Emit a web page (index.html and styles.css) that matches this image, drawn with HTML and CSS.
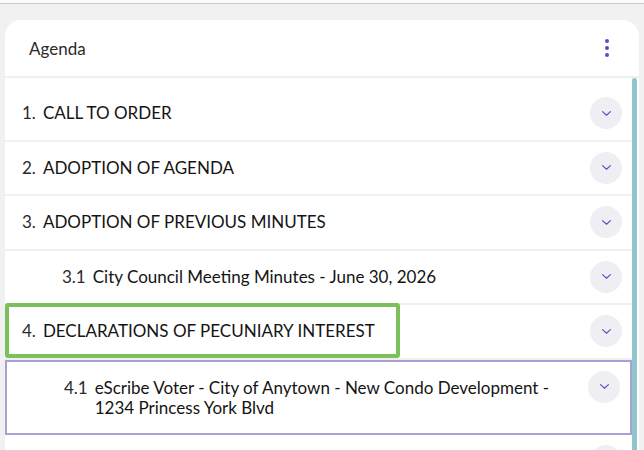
FILE: index.html
```html
<!DOCTYPE html>
<html>
<head>
    <link rel="stylesheet" href="styles.css">
</head>
<body>
    <div class="topbar"></div>
    <div class="page">
        <div class="agenda-card">
            <!-- header -->
            <div class="card-header">
                <div class="card-title">Agenda</div>
                <button class="kebab" aria-label="More">
                    <span></span><span></span><span></span>
                </button>
            </div>

            <div class="card-body">
                <div class="agenda-list">
                    <div class="agenda-item">
                        <div class="item-label"><span class="item-num">1.</span><span class="item-title">CALL TO ORDER</span></div>
                        <button class="toggle"><svg viewBox="0 0 12 8" width="11" height="7"><path d="M1.5 1.8 6 6 10.5 1.8" /></svg></button>
                    </div>
                    <div class="agenda-item">
                        <div class="item-label"><span class="item-num">2.</span><span class="item-title">ADOPTION OF AGENDA</span></div>
                        <button class="toggle"><svg viewBox="0 0 12 8" width="11" height="7"><path d="M1.5 1.8 6 6 10.5 1.8" /></svg></button>
                    </div>
                    <div class="agenda-item">
                        <div class="item-label"><span class="item-num">3.</span><span class="item-title">ADOPTION OF PREVIOUS MINUTES</span></div>
                        <button class="toggle"><svg viewBox="0 0 12 8" width="11" height="7"><path d="M1.5 1.8 6 6 10.5 1.8" /></svg></button>
                    </div>
                    <div class="agenda-item sub">
                        <div class="item-label"><span class="item-num">3.1</span><span class="item-title">City Council Meeting Minutes - June 30, 2026</span></div>
                        <button class="toggle"><svg viewBox="0 0 12 8" width="11" height="7"><path d="M1.5 1.8 6 6 10.5 1.8" /></svg></button>
                    </div>
                    <div class="agenda-item marked">
                        <div class="mark-box"></div>
                        <div class="item-label"><span class="item-num">4.</span><span class="item-title">DECLARATIONS OF PECUNIARY INTEREST</span></div>
                        <button class="toggle"><svg viewBox="0 0 12 8" width="11" height="7"><path d="M1.5 1.8 6 6 10.5 1.8" /></svg></button>
                    </div>
                    <div class="agenda-item sub selected">
                        <div class="item-label"><span class="item-num">4.1</span><span class="item-title">eScribe Voter - City of Anytown - New Condo Development - 1234 Princess York Blvd</span></div>
                        <button class="toggle"><svg viewBox="0 0 12 8" width="11" height="7"><path d="M1.5 1.8 6 6 10.5 1.8" /></svg></button>
                    </div>
                    <div class="agenda-item">
                        <div class="item-label"></div>
                        <button class="toggle"><svg viewBox="0 0 12 8" width="11" height="7"><path d="M1.5 1.8 6 6 10.5 1.8" /></svg></button>
                    </div>
                </div>
                <div class="scroll-track">
                    <div class="scroll-thumb"></div>
                </div>
            </div>
        </div>
    </div>
</body>
</html>
```

FILE: styles.css
```css
body {
    margin: 0;
    height: 450px;
    overflow: hidden;
    background: #f1f1f1;
    font-family: Lato, 'Liberation Sans', sans-serif;
    color: #1c1c1c;
}

.topbar {
    height: 3px;
    background: #fafafa;
    border-bottom: 1px solid #cdcdcd;
}

.page {
    padding: 16px 5px 0 5px;
}

.agenda-card {
    background: white;
    border-radius: 16px 16px 0 0;
    height: 440px;
    overflow: hidden;
}

/* header */
.card-header {
    height: 56px;
    display: flex;
    align-items: center;
    justify-content: space-between;
    padding: 0 26px 0 24px;
    border-bottom: 2px solid #efefef;
}

.card-title {
    font-size: 17px;
    color: #2a2a2a;
}

.kebab {
    border: none;
    background: none;
    padding: 0;
    width: 12px;
    display: flex;
    flex-direction: column;
    align-items: center;
    gap: 3px;
}

.kebab span {
    width: 4px;
    height: 4px;
    border-radius: 50%;
    background: #5a4bc2;
}

/* list + scrollbar */
.card-body {
    display: flex;
}

.agenda-list {
    flex: 1;
    padding-top: 9px;
}

.scroll-track {
    width: 7px;
}

.scroll-thumb {
    width: 5px;
    height: 380px;
    background: #8fc6cc;
    border-radius: 3px 3px 0 0;
}

.agenda-item {
    position: relative;
    display: flex;
    align-items: center;
    justify-content: space-between;
    min-height: 52.5px;
    padding: 0 10px 0 17px;
    border-bottom: 2px solid #f0f0f0;
    font-size: 17px;
}

.agenda-item.sub {
    padding-left: 57px;
}

.item-label {
    display: flex;
    line-height: 20px;
}

.item-num {
    margin-right: 7px;
    color: #2b2b2b;
    white-space: nowrap;
}

.item-title {
    color: #141414;
}

.toggle {
    flex: none;
    width: 32px;
    height: 32px;
    margin-left: 24px;
    border: none;
    border-radius: 50%;
    background: #efeef3;
    display: flex;
    align-items: center;
    justify-content: center;
    padding: 0;
}

.toggle svg path {
    fill: none;
    stroke: #5a4fc8;
    stroke-width: 1.3;
    stroke-linecap: round;
    stroke-linejoin: round;
}

/* highlighted item outline */
.mark-box {
    position: absolute;
    left: 0;
    top: -2px;
    bottom: 0;
    width: 395px;
    box-sizing: border-box;
    border: 4px solid #7bc05b;
    border-radius: 3px;
}

/* selected item */
.agenda-item.selected {
    align-items: flex-start;
    min-height: 0;
    padding-top: 16px;
    padding-bottom: 15px;
    border: 2px solid #ab9fd6;
}

.agenda-item.selected .item-title {
    max-width: 470px;
}

.agenda-item.selected .toggle {
    margin-top: -7px;
}
```
